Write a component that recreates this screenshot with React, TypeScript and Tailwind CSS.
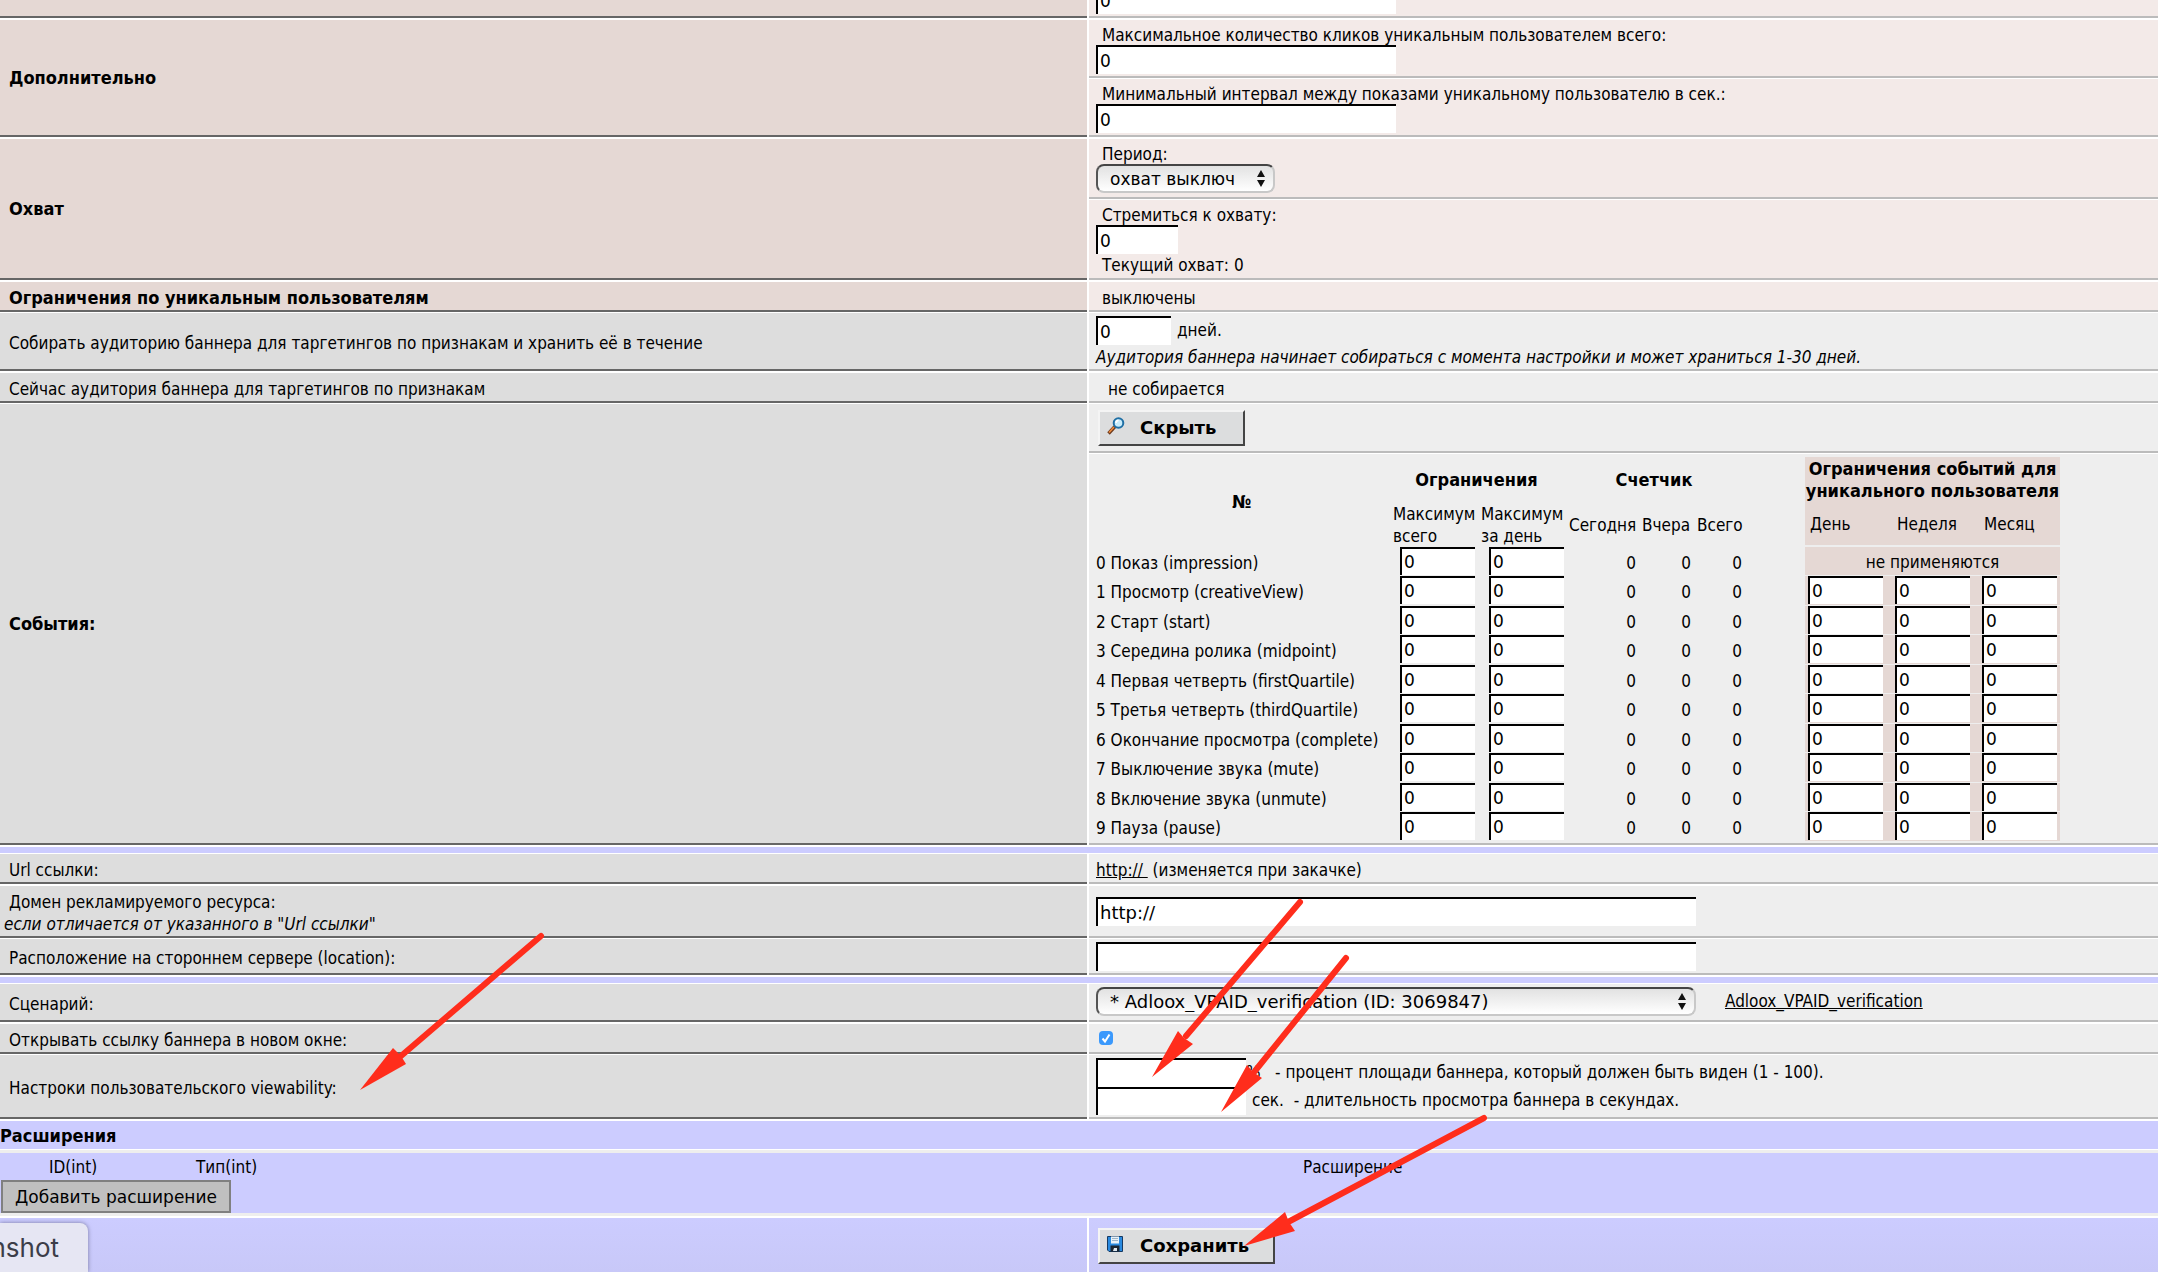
import type { ReactNode } from 'react';
import clsx from 'clsx';

const events = [
  'Показ (impression)',
  'Просмотр (creativeView)',
  'Старт (start)',
  'Середина ролика (midpoint)',
  'Первая четверть (firstQuartile)',
  'Третья четверть (thirdQuartile)',
  'Окончание просмотра (complete)',
  'Выключение звука (mute)',
  'Включение звука (unmute)',
  'Пауза (pause)',
];

const arrows = [
  { shaft: 'M541 936L401 1056', head: '360,1090 393,1048 401,1056 406,1064' },
  { shaft: 'M1300 902L1186 1036', head: '1152,1077 1178,1031 1184,1038 1193,1044' },
  { shaft: 'M1346 958L1255 1071', head: '1221,1112 1247,1065 1253,1072 1262,1078' },
  { shaft: 'M1484 1118L1290 1221', head: '1244,1246 1285,1212 1289,1222 1295,1231' },
];

const tones = {
  gray: { left: 'bg-[#dddddd]', right: 'bg-[#eeeeee]' },
  pink: { left: 'bg-[#e5d8d4]', right: 'bg-[#f3eae8]' },
};

type RowProps = {
  label?: ReactNode;
  tone?: 'gray' | 'pink';
  bold?: boolean;
  className?: string;
  children: ReactNode;
};

function Row({ label, tone = 'gray', bold, className, children }: RowProps) {
  return (
    <div className={clsx('grid grid-cols-[minmax(0,1087fr)_minmax(0,1069fr)] gap-x-0.5', className)}>
      <div
        className={clsx(
          'flex flex-col justify-center border-b-2 border-[#666666] pl-[9px]',
          tones[tone].left,
          bold ? 'text-[18px] font-bold' : 'pt-[3px]'
        )}
      >
        {label}
      </div>
      <div className="flex min-h-0 flex-col gap-px">{children}</div>
    </div>
  );
}

function Cell({ tone = 'gray', className, children }: { tone?: 'gray' | 'pink'; className?: string; children: ReactNode }) {
  return <div className={clsx('grow border-b-2 border-[#bbbbbb] pl-[7px]', tones[tone].right, className)}>{children}</div>;
}

function TextBox({ className, ...rest }: React.InputHTMLAttributes<HTMLInputElement>) {
  return (
    <input
      type="text"
      className={clsx(
        'block border-0 border-l-2 border-t-2 border-black bg-white pl-0.5 font-[Verdana,"DejaVu_Sans",sans-serif] leading-5 text-black outline-none',
        className
      )}
      {...rest}
    />
  );
}

function Select({ id, value, className }: { id: string; value: string; className?: string }) {
  return (
    <div className={clsx('relative h-[29px]', className)}>
      <select
        id={id}
        className="block h-full w-full appearance-none rounded-lg border-2 border-b-[#c8c8c8] border-l-[#555555] border-r-[#c8c8c8] border-t-[#444444] bg-linear-to-b from-[#e2e2e2] to-white pl-3 font-[Verdana,'DejaVu_Sans',sans-serif] leading-5 text-black"
      >
        <option>{value}</option>
      </select>
      <svg className="pointer-events-none absolute right-2.5 top-1.5 h-[17px] w-2" viewBox="0 0 8 17">
        <path d="M4 0L8 7H0ZM4 17L0 10H8Z" fill="#111" />
      </svg>
    </div>
  );
}

function SearchIcon() {
  return (
    <svg className="mb-1 h-[18px] w-[18px]" viewBox="0 0 18 18">
      <path d="M1.5 16.5L8 9.5" stroke="#6b3a1e" strokeWidth="3.4" />
      <path d="M2 15.5L7 10" stroke="#f08a3c" strokeWidth="1.6" />
      <circle cx="11.5" cy="6" r="4.8" fill="#c9ecfb" stroke="#1f6fa5" strokeWidth="2" />
      <path d="M9 6a2.6 2.6 0 0 1 2.5-2.6" stroke="#fff" strokeWidth="1.6" fill="none" />
    </svg>
  );
}

function SaveIcon() {
  return (
    <svg className="mb-1 h-4 w-4" viewBox="0 0 16 16">
      <path d="M0.5 0.5H15.5V15.5H2L0.5 14Z" fill="#2a8ae0" stroke="#173a63" />
      <rect x="4" y="0.5" width="8" height="7" fill="#e8f1f8" />
      <path d="M5 2.5H11M5 4.5H11" stroke="#9db4c8" />
      <rect x="3.5" y="9.5" width="9" height="6" fill="#1b2530" />
      <path d="M6 15L7 12H10V15Z" fill="#dfe7ee" />
    </svg>
  );
}

function ActionButton({ icon, className, children }: { icon: ReactNode; className?: string; children: ReactNode }) {
  return (
    <button
      type="button"
      className={clsx(
        'flex h-9 items-center border-2 border-b-[#444444] border-l-[#f4f4f4] border-r-[#444444] border-t-[#f4f4f4] bg-[#dcddde] pl-[7px] font-[Verdana,"DejaVu_Sans",sans-serif] text-[18px] font-bold leading-5',
        className
      )}
    >
      <span className="flex w-[33px]">{icon}</span>
      {children}
    </button>
  );
}

function EventsTable() {
  return (
    <table className="w-[964px] table-fixed border-separate border-spacing-0">
      <colgroup>
        <col className="w-[292px]" />
        <col className="w-[88px]" />
        <col className="w-[89px]" />
        <col className="w-[72px]" />
        <col className="w-[55px]" />
        <col className="w-[51px]" />
        <col className="w-[62px]" />
        <col className="w-[87px]" />
        <col className="w-[87px]" />
        <col className="w-[81px]" />
      </colgroup>
      <thead>
        <tr className="h-[46px] text-[18px]">
          <th rowSpan={2}>№</th>
          <th colSpan={2}>Ограничения</th>
          <th colSpan={3}>Счетчик</th>
          <td rowSpan={2} />
          <th colSpan={3} className="whitespace-nowrap bg-[#e5d8d4] p-0">
            Ограничения событий для
            <br />
            уникального пользователя
          </th>
        </tr>
        <tr className="h-11 whitespace-nowrap text-left">
          <td className="p-0 pl-[5px]">
            Максимум
            <br />
            всего
          </td>
          <td className="p-0 pl-[5px]">
            Максимум
            <br />
            за день
          </td>
          <td className="p-0 pl-1">Сегодня</td>
          <td className="p-0 pl-[5px]">Вчера</td>
          <td className="p-0 pl-[5px]">Всего</td>
          <td className="border-b-2 border-[#eeeeee] bg-[#e5d8d4] p-0 pl-[5px]">День</td>
          <td className="border-b-2 border-[#eeeeee] bg-[#e5d8d4] p-0 pl-[5px]">Неделя</td>
          <td className="border-b-2 border-[#eeeeee] bg-[#e5d8d4] p-0 pl-[5px]">Месяц</td>
        </tr>
      </thead>
      <tbody>
        {events.map((name, i) => (
          <tr key={name} className={i % 2 ? 'h-[30px]' : 'h-[29px]'}>
            <td className="whitespace-nowrap p-0 pt-0.5">
              {i} {name}
            </td>
            {['Максимум всего', 'Максимум за день'].map((col) => (
              <td key={col} className="p-0 pr-px align-top">
                <TextBox aria-label={`${name}: ${col}`} defaultValue="0" className="ml-auto h-7 w-[75px]" />
              </td>
            ))}
            <td className="p-0 pr-px pt-0.5 text-right">0</td>
            <td className="p-0 pr-px pt-0.5 text-right">0</td>
            <td className="p-0 pr-px pt-0.5 text-right">0</td>
            <td />
            {i === 0 ? (
              <td colSpan={3} className="border-b border-[#eeeeee] bg-[#e5d8d4] p-0 pt-0.5 text-center">
                не применяются
              </td>
            ) : (
              ['День', 'Неделя', 'Месяц'].map((col) => (
                <td key={col} className="border-b border-[#eeeeee] bg-[#e5d8d4] p-0 pl-[3px] align-top">
                  <TextBox aria-label={`${name}: ${col}`} defaultValue="0" className="h-7 w-[75px]" />
                </td>
              ))
            )}
          </tr>
        ))}
      </tbody>
    </table>
  );
}

function Divider() {
  return <div className="mb-px h-1.5 bg-[#ccccff]" />;
}

export default function App() {
  return (
    <div className="relative flex min-h-screen flex-col overflow-hidden bg-white font-[Tahoma,'DejaVu_Sans_Condensed','DejaVu_Sans',sans-serif] text-[17px] leading-[22px] text-black">
      {/* Tail of the row scrolled out at the top */}
      <Row tone="pink" className="mb-0.5 h-[18px]">
        <Cell tone="pink" className="flex min-h-0 flex-col justify-end pb-0.5">
          <TextBox aria-label="Клики" defaultValue="0" className="h-[29px] w-[300px] shrink-0" />
        </Cell>
      </Row>

      <Row label="Дополнительно" tone="pink" bold className="mb-0.5">
        <Cell tone="pink" className="pb-0.5 pt-1">
          <label htmlFor="max-clicks" className="block h-[21px] pl-1.5">
            Максимальное количество кликов уникальным пользователем всего:
          </label>
          <TextBox id="max-clicks" defaultValue="0" className="h-[29px] w-[300px]" />
        </Cell>
        <Cell tone="pink" className="pb-0.5 pt-1">
          <label htmlFor="min-interval" className="block h-[21px] pl-1.5">
            Минимальный интервал между показами уникальному пользователю в сек.:
          </label>
          <TextBox id="min-interval" defaultValue="0" className="h-[29px] w-[300px]" />
        </Cell>
      </Row>

      <Row label="Охват" tone="pink" bold className="mb-0.5">
        <Cell tone="pink" className="pb-1 pt-1">
          <label htmlFor="period" className="block h-[21px] pl-1.5">
            Период:
          </label>
          <Select id="period" value="охват выключ" className="w-[179px]" />
        </Cell>
        <Cell tone="pink" className="pb-0.5 pt-1">
          <label htmlFor="reach" className="block h-[21px] pl-1.5">
            Стремиться к охвату:
          </label>
          <TextBox id="reach" defaultValue="0" className="h-[29px] w-[82px]" />
          <p className="pl-1.5">Текущий охват: 0</p>
        </Cell>
      </Row>

      <Row label={<span className="pt-[3px]">Ограничения по уникальным пользователям</span>} tone="pink" bold className="mb-px">
        <Cell tone="pink" className="pb-px pt-[5px]">
          <p className="pl-1.5">выключены</p>
        </Cell>
      </Row>

      <Row
        label={<label htmlFor="days">Собирать аудиторию баннера для таргетингов по признакам и хранить её в течение</label>}
        className="mb-0.5"
      >
        <Cell className="pb-px pt-[3px]">
          <div className="flex gap-1.5 pb-px">
            <TextBox id="days" defaultValue="0" className="h-[29px] w-[75px]" />
            <span className="pt-[3px]">дней.</span>
          </div>
          <p className="italic">Аудитория баннера начинает собираться с момента настройки и может храниться 1-30 дней.</p>
        </Cell>
      </Row>

      <Row label="Сейчас аудитория баннера для таргетингов по признакам" className="mb-px">
        <Cell className="pb-px pt-[5px]">
          <p className="pl-3">не собирается</p>
        </Cell>
      </Row>

      <Row label="События:" bold className="mb-0.5">
        <Cell className="pb-[5px] pl-[9px] pt-1.5">
          <ActionButton icon={<SearchIcon />} className="w-[147px]">
            Скрыть
          </ActionButton>
        </Cell>
        <Cell className="pb-px pt-[3px]">
          <EventsTable />
        </Cell>
      </Row>

      <Divider />

      <Row label="Url ссылки:" className="mb-0.5">
        <Cell className="pb-px pt-[5px]">
          <p>
            <a href="#url" className="whitespace-pre underline">
              {'http:// '}
            </a>
            {' (изменяется при закачке)'}
          </p>
        </Cell>
      </Row>

      <Row
        label={
          <label htmlFor="domain">
            Домен рекламируемого ресурса:
            <br />
            <i className="-ml-[5px]">если отличается от указанного в "Url ссылки"</i>
          </label>
        }
        className="mb-px"
      >
        <Cell className="flex min-h-[52px] items-center">
          <TextBox id="domain" defaultValue="http://" className="h-[29px] w-[600px] text-[18px]" />
        </Cell>
      </Row>

      <Row label={<label htmlFor="location">Расположение на стороннем сервере (location):</label>} className="mb-0.5">
        <Cell className="pb-0.5 pt-[3px]">
          <TextBox id="location" className="h-[29px] w-[600px] text-[18px]" />
        </Cell>
      </Row>

      <Divider />

      <Row label={<label htmlFor="script">Сценарий:</label>} className="mb-0.5">
        <Cell className="flex gap-[29px] pb-1 pt-[3px]">
          <Select id="script" value="* Adloox_VPAID_verification (ID: 3069847)" className="w-[600px] text-[18px]" />
          <a href="#script" className="pt-[3px] underline">
            Adloox_VPAID_verification
          </a>
        </Cell>
      </Row>

      <Row label={<label htmlFor="new-window">Открывать ссылку баннера в новом окне:</label>} className="mb-px">
        <Cell className="flex min-h-[30px] items-center">
          <span className="relative ml-[3px] flex">
            <input
              id="new-window"
              type="checkbox"
              defaultChecked
              className="h-3.5 w-3.5 appearance-none rounded-sm bg-[#3b99fc]"
            />
            <svg className="pointer-events-none absolute inset-0 h-3.5 w-3.5" viewBox="0 0 14 14">
              <path d="M3.5 7.5L6 10.5L10.5 3.5" stroke="#fff" strokeWidth="2" fill="none" />
            </svg>
          </span>
        </Cell>
      </Row>

      <Row label="Настроки пользовательского viewability:" className="mb-0.5">
        <Cell className="pb-0.5 pt-[3px]">
          <div className="flex">
            <TextBox id="view-percent" className="h-[29px] w-[150px]" />
            <label htmlFor="view-percent" className="whitespace-pre pt-[3px]">
              {'%   - процент площади баннера, который должен быть виден (1 - 100).'}
            </label>
          </div>
          <div className="flex">
            <TextBox id="view-seconds" className="h-7 w-[150px]" />
            <label htmlFor="view-seconds" className="whitespace-pre pl-1.5 pt-0.5">
              {'сек.  - длительность просмотра баннера в секундах.'}
            </label>
          </div>
        </Cell>
      </Row>

      {/* Extensions */}
      <h2 className="mb-px bg-[#ccccff] pb-0.5 pt-1 text-[18px] font-bold">Расширения</h2>
      <div className="border-y-[3px] border-[#eeeeee] bg-[#ccccff] pt-[3px]">
        <div className="grid grid-cols-[49px_147px_minmax(0,1107fr)_minmax(0,855fr)] pb-0.5">
          <span />
          <span>ID(int)</span>
          <span>Тип(int)</span>
          <span>Расширение</span>
        </div>
        <button
          type="button"
          className="ml-px block h-[33px] w-[230px] whitespace-nowrap border-2 border-[#808080] bg-[#c0c0c0] font-[Verdana,'DejaVu_Sans',sans-serif] leading-5"
        >
          Добавить расширение
        </button>
      </div>

      <div className="mt-0.5 grid min-h-[54px] grow grid-cols-[minmax(0,1087fr)_minmax(0,1069fr)] gap-x-0.5">
        <div className="bg-linear-to-b from-[#ccccff] to-[#c8c8f8]" />
        <div className="bg-linear-to-b from-[#ccccff] to-[#c8c8f8] pl-[9px] pt-2.5">
          <ActionButton icon={<SaveIcon />} className="w-[177px]">
            Сохранить
          </ActionButton>
        </div>
      </div>

      <div className="absolute bottom-0 left-0 flex h-[49px] w-[88px] items-center justify-end overflow-hidden rounded-tr-lg bg-[#e6e6f3] pr-[29px] font-[Inter,sans-serif] text-[26px] leading-8 text-[#3c3d48] shadow-[0_0_4px_#7777a0]">
        nshot
      </div>

      {/* Pointer arrows drawn over the form */}
      <svg className="pointer-events-none absolute left-0 top-0 h-[1272px] w-[2158px]" viewBox="0 0 2158 1272">
        {arrows.map((a) => (
          <g key={a.shaft}>
            <path d={a.shaft} stroke="#ff2d1c" strokeWidth="6" strokeLinecap="round" />
            <polygon points={a.head} fill="#ff2d1c" />
          </g>
        ))}
      </svg>
    </div>
  );
}
